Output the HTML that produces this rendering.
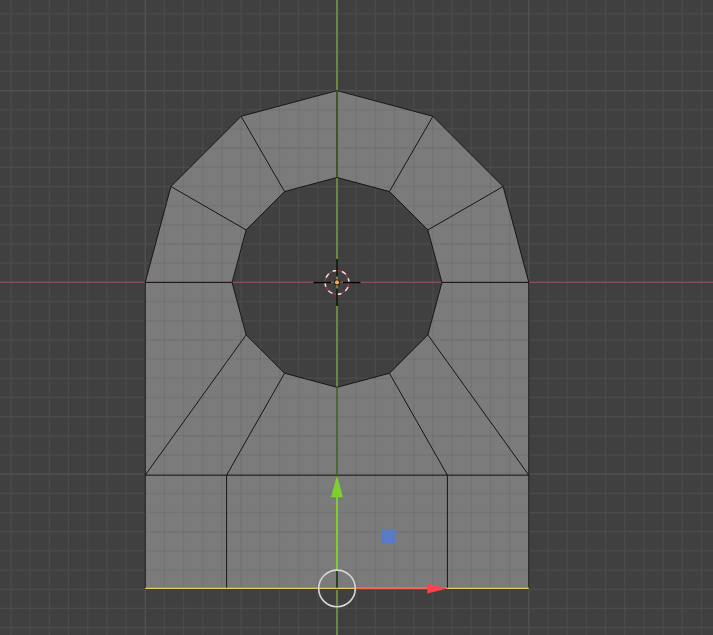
<!DOCTYPE html>
<html><head><meta charset="utf-8"><style>
html,body{margin:0;padding:0;background:#404040;width:713px;height:635px;overflow:hidden;}
svg{display:block;}
</style></head><body>
<svg width="713" height="635" viewBox="0 0 713 635">
<rect x="0" y="0" width="713" height="635" fill="#404040"/>
<line x1="10.94" y1="0" x2="10.94" y2="635" stroke="#4b4b4b" stroke-width="1.25"/>
<line x1="30.12" y1="0" x2="30.12" y2="635" stroke="#4b4b4b" stroke-width="1.25"/>
<line x1="49.30" y1="0" x2="49.30" y2="635" stroke="#4b4b4b" stroke-width="1.25"/>
<line x1="68.48" y1="0" x2="68.48" y2="635" stroke="#4b4b4b" stroke-width="1.25"/>
<line x1="0" y1="13.88" x2="713" y2="13.88" stroke="#4b4b4b" stroke-width="1.25"/>
<line x1="87.66" y1="0" x2="87.66" y2="635" stroke="#4b4b4b" stroke-width="1.25"/>
<line x1="0" y1="33.06" x2="713" y2="33.06" stroke="#4b4b4b" stroke-width="1.25"/>
<line x1="106.84" y1="0" x2="106.84" y2="635" stroke="#4b4b4b" stroke-width="1.25"/>
<line x1="0" y1="52.24" x2="713" y2="52.24" stroke="#4b4b4b" stroke-width="1.25"/>
<line x1="126.02" y1="0" x2="126.02" y2="635" stroke="#4b4b4b" stroke-width="1.25"/>
<line x1="0" y1="71.42" x2="713" y2="71.42" stroke="#4b4b4b" stroke-width="1.25"/>
<line x1="145.20" y1="0" x2="145.20" y2="635" stroke="#535353" stroke-width="1.25"/>
<line x1="0" y1="90.60" x2="713" y2="90.60" stroke="#535353" stroke-width="1.25"/>
<line x1="164.38" y1="0" x2="164.38" y2="635" stroke="#4b4b4b" stroke-width="1.25"/>
<line x1="0" y1="109.78" x2="713" y2="109.78" stroke="#4b4b4b" stroke-width="1.25"/>
<line x1="183.56" y1="0" x2="183.56" y2="635" stroke="#4b4b4b" stroke-width="1.25"/>
<line x1="0" y1="128.96" x2="713" y2="128.96" stroke="#4b4b4b" stroke-width="1.25"/>
<line x1="202.74" y1="0" x2="202.74" y2="635" stroke="#4b4b4b" stroke-width="1.25"/>
<line x1="0" y1="148.14" x2="713" y2="148.14" stroke="#4b4b4b" stroke-width="1.25"/>
<line x1="221.92" y1="0" x2="221.92" y2="635" stroke="#4b4b4b" stroke-width="1.25"/>
<line x1="0" y1="167.32" x2="713" y2="167.32" stroke="#4b4b4b" stroke-width="1.25"/>
<line x1="241.10" y1="0" x2="241.10" y2="635" stroke="#4b4b4b" stroke-width="1.25"/>
<line x1="0" y1="186.50" x2="713" y2="186.50" stroke="#4b4b4b" stroke-width="1.25"/>
<line x1="260.28" y1="0" x2="260.28" y2="635" stroke="#4b4b4b" stroke-width="1.25"/>
<line x1="0" y1="205.68" x2="713" y2="205.68" stroke="#4b4b4b" stroke-width="1.25"/>
<line x1="279.46" y1="0" x2="279.46" y2="635" stroke="#4b4b4b" stroke-width="1.25"/>
<line x1="0" y1="224.86" x2="713" y2="224.86" stroke="#4b4b4b" stroke-width="1.25"/>
<line x1="298.64" y1="0" x2="298.64" y2="635" stroke="#4b4b4b" stroke-width="1.25"/>
<line x1="0" y1="244.04" x2="713" y2="244.04" stroke="#4b4b4b" stroke-width="1.25"/>
<line x1="317.82" y1="0" x2="317.82" y2="635" stroke="#4b4b4b" stroke-width="1.25"/>
<line x1="0" y1="263.22" x2="713" y2="263.22" stroke="#4b4b4b" stroke-width="1.25"/>
<line x1="337.00" y1="0" x2="337.00" y2="635" stroke="#535353" stroke-width="1.25"/>
<line x1="0" y1="282.40" x2="713" y2="282.40" stroke="#535353" stroke-width="1.25"/>
<line x1="356.18" y1="0" x2="356.18" y2="635" stroke="#4b4b4b" stroke-width="1.25"/>
<line x1="0" y1="301.58" x2="713" y2="301.58" stroke="#4b4b4b" stroke-width="1.25"/>
<line x1="375.36" y1="0" x2="375.36" y2="635" stroke="#4b4b4b" stroke-width="1.25"/>
<line x1="0" y1="320.76" x2="713" y2="320.76" stroke="#4b4b4b" stroke-width="1.25"/>
<line x1="394.54" y1="0" x2="394.54" y2="635" stroke="#4b4b4b" stroke-width="1.25"/>
<line x1="0" y1="339.94" x2="713" y2="339.94" stroke="#4b4b4b" stroke-width="1.25"/>
<line x1="413.72" y1="0" x2="413.72" y2="635" stroke="#4b4b4b" stroke-width="1.25"/>
<line x1="0" y1="359.12" x2="713" y2="359.12" stroke="#4b4b4b" stroke-width="1.25"/>
<line x1="432.90" y1="0" x2="432.90" y2="635" stroke="#4b4b4b" stroke-width="1.25"/>
<line x1="0" y1="378.30" x2="713" y2="378.30" stroke="#4b4b4b" stroke-width="1.25"/>
<line x1="452.08" y1="0" x2="452.08" y2="635" stroke="#4b4b4b" stroke-width="1.25"/>
<line x1="0" y1="397.48" x2="713" y2="397.48" stroke="#4b4b4b" stroke-width="1.25"/>
<line x1="471.26" y1="0" x2="471.26" y2="635" stroke="#4b4b4b" stroke-width="1.25"/>
<line x1="0" y1="416.66" x2="713" y2="416.66" stroke="#4b4b4b" stroke-width="1.25"/>
<line x1="490.44" y1="0" x2="490.44" y2="635" stroke="#4b4b4b" stroke-width="1.25"/>
<line x1="0" y1="435.84" x2="713" y2="435.84" stroke="#4b4b4b" stroke-width="1.25"/>
<line x1="509.62" y1="0" x2="509.62" y2="635" stroke="#4b4b4b" stroke-width="1.25"/>
<line x1="0" y1="455.02" x2="713" y2="455.02" stroke="#4b4b4b" stroke-width="1.25"/>
<line x1="528.80" y1="0" x2="528.80" y2="635" stroke="#535353" stroke-width="1.25"/>
<line x1="0" y1="474.20" x2="713" y2="474.20" stroke="#535353" stroke-width="1.25"/>
<line x1="547.98" y1="0" x2="547.98" y2="635" stroke="#4b4b4b" stroke-width="1.25"/>
<line x1="0" y1="493.38" x2="713" y2="493.38" stroke="#4b4b4b" stroke-width="1.25"/>
<line x1="567.16" y1="0" x2="567.16" y2="635" stroke="#4b4b4b" stroke-width="1.25"/>
<line x1="0" y1="512.56" x2="713" y2="512.56" stroke="#4b4b4b" stroke-width="1.25"/>
<line x1="586.34" y1="0" x2="586.34" y2="635" stroke="#4b4b4b" stroke-width="1.25"/>
<line x1="0" y1="531.74" x2="713" y2="531.74" stroke="#4b4b4b" stroke-width="1.25"/>
<line x1="605.52" y1="0" x2="605.52" y2="635" stroke="#4b4b4b" stroke-width="1.25"/>
<line x1="0" y1="550.92" x2="713" y2="550.92" stroke="#4b4b4b" stroke-width="1.25"/>
<line x1="624.70" y1="0" x2="624.70" y2="635" stroke="#4b4b4b" stroke-width="1.25"/>
<line x1="0" y1="570.10" x2="713" y2="570.10" stroke="#4b4b4b" stroke-width="1.25"/>
<line x1="643.88" y1="0" x2="643.88" y2="635" stroke="#4b4b4b" stroke-width="1.25"/>
<line x1="0" y1="589.28" x2="713" y2="589.28" stroke="#4b4b4b" stroke-width="1.25"/>
<line x1="663.06" y1="0" x2="663.06" y2="635" stroke="#4b4b4b" stroke-width="1.25"/>
<line x1="0" y1="608.46" x2="713" y2="608.46" stroke="#4b4b4b" stroke-width="1.25"/>
<line x1="682.24" y1="0" x2="682.24" y2="635" stroke="#4b4b4b" stroke-width="1.25"/>
<line x1="0" y1="627.64" x2="713" y2="627.64" stroke="#4b4b4b" stroke-width="1.25"/>
<line x1="701.42" y1="0" x2="701.42" y2="635" stroke="#4b4b4b" stroke-width="1.25"/>
<path d="M528.80,588.40 L528.80,282.40 L503.10,186.50 L432.90,116.30 L337.00,90.60 L241.10,116.30 L170.90,186.50 L145.20,282.40 L145.20,588.40 Z M441.91,282.40 L427.86,229.94 L389.46,191.54 L337.00,177.49 L284.54,191.54 L246.14,229.94 L232.09,282.40 L246.14,334.86 L284.54,373.26 L337.00,387.31 L389.46,373.26 L427.86,334.86 Z" fill="#7b7b7b" fill-rule="evenodd"/>
<clipPath id="mc"><path d="M528.80,588.40 L528.80,282.40 L503.10,186.50 L432.90,116.30 L337.00,90.60 L241.10,116.30 L170.90,186.50 L145.20,282.40 L145.20,588.40 Z M441.91,282.40 L427.86,229.94 L389.46,191.54 L337.00,177.49 L284.54,191.54 L246.14,229.94 L232.09,282.40 L246.14,334.86 L284.54,373.26 L337.00,387.31 L389.46,373.26 L427.86,334.86 Z" clip-rule="evenodd"/></clipPath>
<g clip-path="url(#mc)"><line x1="10.94" y1="0" x2="10.94" y2="635" stroke="rgba(0,0,0,0.055)" stroke-width="1.5"/><line x1="30.12" y1="0" x2="30.12" y2="635" stroke="rgba(0,0,0,0.055)" stroke-width="1.5"/><line x1="49.30" y1="0" x2="49.30" y2="635" stroke="rgba(0,0,0,0.055)" stroke-width="1.5"/><line x1="68.48" y1="0" x2="68.48" y2="635" stroke="rgba(0,0,0,0.055)" stroke-width="1.5"/><line x1="0" y1="13.88" x2="713" y2="13.88" stroke="rgba(0,0,0,0.055)" stroke-width="1.5"/><line x1="87.66" y1="0" x2="87.66" y2="635" stroke="rgba(0,0,0,0.055)" stroke-width="1.5"/><line x1="0" y1="33.06" x2="713" y2="33.06" stroke="rgba(0,0,0,0.055)" stroke-width="1.5"/><line x1="106.84" y1="0" x2="106.84" y2="635" stroke="rgba(0,0,0,0.055)" stroke-width="1.5"/><line x1="0" y1="52.24" x2="713" y2="52.24" stroke="rgba(0,0,0,0.055)" stroke-width="1.5"/><line x1="126.02" y1="0" x2="126.02" y2="635" stroke="rgba(0,0,0,0.055)" stroke-width="1.5"/><line x1="0" y1="71.42" x2="713" y2="71.42" stroke="rgba(0,0,0,0.055)" stroke-width="1.5"/><line x1="145.20" y1="0" x2="145.20" y2="635" stroke="rgba(0,0,0,0.055)" stroke-width="1.5"/><line x1="0" y1="90.60" x2="713" y2="90.60" stroke="rgba(0,0,0,0.055)" stroke-width="1.5"/><line x1="164.38" y1="0" x2="164.38" y2="635" stroke="rgba(0,0,0,0.055)" stroke-width="1.5"/><line x1="0" y1="109.78" x2="713" y2="109.78" stroke="rgba(0,0,0,0.055)" stroke-width="1.5"/><line x1="183.56" y1="0" x2="183.56" y2="635" stroke="rgba(0,0,0,0.055)" stroke-width="1.5"/><line x1="0" y1="128.96" x2="713" y2="128.96" stroke="rgba(0,0,0,0.055)" stroke-width="1.5"/><line x1="202.74" y1="0" x2="202.74" y2="635" stroke="rgba(0,0,0,0.055)" stroke-width="1.5"/><line x1="0" y1="148.14" x2="713" y2="148.14" stroke="rgba(0,0,0,0.055)" stroke-width="1.5"/><line x1="221.92" y1="0" x2="221.92" y2="635" stroke="rgba(0,0,0,0.055)" stroke-width="1.5"/><line x1="0" y1="167.32" x2="713" y2="167.32" stroke="rgba(0,0,0,0.055)" stroke-width="1.5"/><line x1="241.10" y1="0" x2="241.10" y2="635" stroke="rgba(0,0,0,0.055)" stroke-width="1.5"/><line x1="0" y1="186.50" x2="713" y2="186.50" stroke="rgba(0,0,0,0.055)" stroke-width="1.5"/><line x1="260.28" y1="0" x2="260.28" y2="635" stroke="rgba(0,0,0,0.055)" stroke-width="1.5"/><line x1="0" y1="205.68" x2="713" y2="205.68" stroke="rgba(0,0,0,0.055)" stroke-width="1.5"/><line x1="279.46" y1="0" x2="279.46" y2="635" stroke="rgba(0,0,0,0.055)" stroke-width="1.5"/><line x1="0" y1="224.86" x2="713" y2="224.86" stroke="rgba(0,0,0,0.055)" stroke-width="1.5"/><line x1="298.64" y1="0" x2="298.64" y2="635" stroke="rgba(0,0,0,0.055)" stroke-width="1.5"/><line x1="0" y1="244.04" x2="713" y2="244.04" stroke="rgba(0,0,0,0.055)" stroke-width="1.5"/><line x1="317.82" y1="0" x2="317.82" y2="635" stroke="rgba(0,0,0,0.055)" stroke-width="1.5"/><line x1="0" y1="263.22" x2="713" y2="263.22" stroke="rgba(0,0,0,0.055)" stroke-width="1.5"/><line x1="337.00" y1="0" x2="337.00" y2="635" stroke="rgba(0,0,0,0.055)" stroke-width="1.5"/><line x1="0" y1="282.40" x2="713" y2="282.40" stroke="rgba(0,0,0,0.055)" stroke-width="1.5"/><line x1="356.18" y1="0" x2="356.18" y2="635" stroke="rgba(0,0,0,0.055)" stroke-width="1.5"/><line x1="0" y1="301.58" x2="713" y2="301.58" stroke="rgba(0,0,0,0.055)" stroke-width="1.5"/><line x1="375.36" y1="0" x2="375.36" y2="635" stroke="rgba(0,0,0,0.055)" stroke-width="1.5"/><line x1="0" y1="320.76" x2="713" y2="320.76" stroke="rgba(0,0,0,0.055)" stroke-width="1.5"/><line x1="394.54" y1="0" x2="394.54" y2="635" stroke="rgba(0,0,0,0.055)" stroke-width="1.5"/><line x1="0" y1="339.94" x2="713" y2="339.94" stroke="rgba(0,0,0,0.055)" stroke-width="1.5"/><line x1="413.72" y1="0" x2="413.72" y2="635" stroke="rgba(0,0,0,0.055)" stroke-width="1.5"/><line x1="0" y1="359.12" x2="713" y2="359.12" stroke="rgba(0,0,0,0.055)" stroke-width="1.5"/><line x1="432.90" y1="0" x2="432.90" y2="635" stroke="rgba(0,0,0,0.055)" stroke-width="1.5"/><line x1="0" y1="378.30" x2="713" y2="378.30" stroke="rgba(0,0,0,0.055)" stroke-width="1.5"/><line x1="452.08" y1="0" x2="452.08" y2="635" stroke="rgba(0,0,0,0.055)" stroke-width="1.5"/><line x1="0" y1="397.48" x2="713" y2="397.48" stroke="rgba(0,0,0,0.055)" stroke-width="1.5"/><line x1="471.26" y1="0" x2="471.26" y2="635" stroke="rgba(0,0,0,0.055)" stroke-width="1.5"/><line x1="0" y1="416.66" x2="713" y2="416.66" stroke="rgba(0,0,0,0.055)" stroke-width="1.5"/><line x1="490.44" y1="0" x2="490.44" y2="635" stroke="rgba(0,0,0,0.055)" stroke-width="1.5"/><line x1="0" y1="435.84" x2="713" y2="435.84" stroke="rgba(0,0,0,0.055)" stroke-width="1.5"/><line x1="509.62" y1="0" x2="509.62" y2="635" stroke="rgba(0,0,0,0.055)" stroke-width="1.5"/><line x1="0" y1="455.02" x2="713" y2="455.02" stroke="rgba(0,0,0,0.055)" stroke-width="1.5"/><line x1="528.80" y1="0" x2="528.80" y2="635" stroke="rgba(0,0,0,0.055)" stroke-width="1.5"/><line x1="0" y1="474.20" x2="713" y2="474.20" stroke="rgba(0,0,0,0.055)" stroke-width="1.5"/><line x1="547.98" y1="0" x2="547.98" y2="635" stroke="rgba(0,0,0,0.055)" stroke-width="1.5"/><line x1="0" y1="493.38" x2="713" y2="493.38" stroke="rgba(0,0,0,0.055)" stroke-width="1.5"/><line x1="567.16" y1="0" x2="567.16" y2="635" stroke="rgba(0,0,0,0.055)" stroke-width="1.5"/><line x1="0" y1="512.56" x2="713" y2="512.56" stroke="rgba(0,0,0,0.055)" stroke-width="1.5"/><line x1="586.34" y1="0" x2="586.34" y2="635" stroke="rgba(0,0,0,0.055)" stroke-width="1.5"/><line x1="0" y1="531.74" x2="713" y2="531.74" stroke="rgba(0,0,0,0.055)" stroke-width="1.5"/><line x1="605.52" y1="0" x2="605.52" y2="635" stroke="rgba(0,0,0,0.055)" stroke-width="1.5"/><line x1="0" y1="550.92" x2="713" y2="550.92" stroke="rgba(0,0,0,0.055)" stroke-width="1.5"/><line x1="624.70" y1="0" x2="624.70" y2="635" stroke="rgba(0,0,0,0.055)" stroke-width="1.5"/><line x1="0" y1="570.10" x2="713" y2="570.10" stroke="rgba(0,0,0,0.055)" stroke-width="1.5"/><line x1="643.88" y1="0" x2="643.88" y2="635" stroke="rgba(0,0,0,0.055)" stroke-width="1.5"/><line x1="0" y1="589.28" x2="713" y2="589.28" stroke="rgba(0,0,0,0.055)" stroke-width="1.5"/><line x1="663.06" y1="0" x2="663.06" y2="635" stroke="rgba(0,0,0,0.055)" stroke-width="1.5"/><line x1="0" y1="608.46" x2="713" y2="608.46" stroke="rgba(0,0,0,0.055)" stroke-width="1.5"/><line x1="682.24" y1="0" x2="682.24" y2="635" stroke="rgba(0,0,0,0.055)" stroke-width="1.5"/><line x1="0" y1="627.64" x2="713" y2="627.64" stroke="rgba(0,0,0,0.055)" stroke-width="1.5"/><line x1="701.42" y1="0" x2="701.42" y2="635" stroke="rgba(0,0,0,0.055)" stroke-width="1.5"/></g>
<line x1="0" y1="282.4" x2="713" y2="282.4" stroke="#87505e" stroke-width="1.3"/>
<line x1="337.0" y1="0" x2="337.0" y2="635" stroke="#688a3e" stroke-width="2"/>
<path d="M528.80,588.40L528.80,282.40M528.80,282.40L503.10,186.50M503.10,186.50L432.90,116.30M432.90,116.30L337.00,90.60M337.00,90.60L241.10,116.30M241.10,116.30L170.90,186.50M170.90,186.50L145.20,282.40M145.20,282.40L145.20,588.40M441.91,282.40L427.86,229.94M427.86,229.94L389.46,191.54M389.46,191.54L337.00,177.49M337.00,177.49L284.54,191.54M284.54,191.54L246.14,229.94M246.14,229.94L232.09,282.40M232.09,282.40L246.14,334.86M246.14,334.86L284.54,373.26M284.54,373.26L337.00,387.31M337.00,387.31L389.46,373.26M389.46,373.26L427.86,334.86M427.86,334.86L441.91,282.40M427.86,229.94L503.10,186.50M389.46,191.54L432.90,116.30M337.00,177.49L337.00,90.60M284.54,191.54L241.10,116.30M246.14,229.94L170.90,186.50M441.91,282.40L528.80,282.40M232.09,282.40L145.20,282.40M246.14,334.86L145.20,475.20M284.54,373.26L226.60,475.20M389.46,373.26L447.40,475.20M427.86,334.86L528.80,475.20M145.20,475.20L528.80,475.20M226.60,475.20L226.60,588.40M447.40,475.20L447.40,588.40" stroke="#161616" stroke-width="1.0" fill="none"/>
<path d="M337.0,177.49L337.0,90.60M337.0,387.31L337.0,588.4" stroke="#3b5a2a" stroke-width="1.3" fill="none"/>
<line x1="145.20" y1="589.5" x2="528.80" y2="589.5" stroke="#4e4010" stroke-width="1.1"/>
<line x1="145.20" y1="588.4" x2="528.80" y2="588.4" stroke="#e4cb66" stroke-width="1.3"/>
<circle cx="337.0" cy="282.4" r="11.9" fill="none" stroke="#963842" stroke-width="1.5"/>
<circle cx="337.0" cy="282.4" r="11.9" fill="none" stroke="#e6e6e6" stroke-width="1.5" stroke-dasharray="4.673 4.673" stroke-dashoffset="4.673"/>
<path d="M313.5,282.4L331.0,282.4M343.0,282.4L360.5,282.4M337.0,258.9L337.0,276.4M337.0,288.4L337.0,305.9" stroke="#000" stroke-width="1.5" fill="none"/>
<circle cx="337.0" cy="282.4" r="2.9" fill="#111"/>
<circle cx="337.0" cy="282.4" r="2.1" fill="#ffa84a"/>
<line x1="337.0" y1="570.1" x2="337.0" y2="496" stroke="#7fcf2e" stroke-width="2"/>
<path d="M337.0,475.3 L343.0,497.3 L331.0,497.3 Z" fill="#7fcf2e"/>
<line x1="355.3" y1="588.4" x2="428" y2="588.4" stroke="#f2664f" stroke-width="1.7"/>
<path d="M447.8,588.4 L427.3,583.4 L427.3,593.4 Z" fill="#fb4350"/>
<line x1="337.0" y1="570.1" x2="337.0" y2="587.6" stroke="#26331f" stroke-width="1.5"/>
<circle cx="337.0" cy="588.4" r="18.3" fill="none" stroke="#d6d6d6" stroke-width="1.6"/>
<rect x="381.3" y="529" width="14.8" height="14.8" fill="#5a7bc6"/>
</svg>
</body></html>
